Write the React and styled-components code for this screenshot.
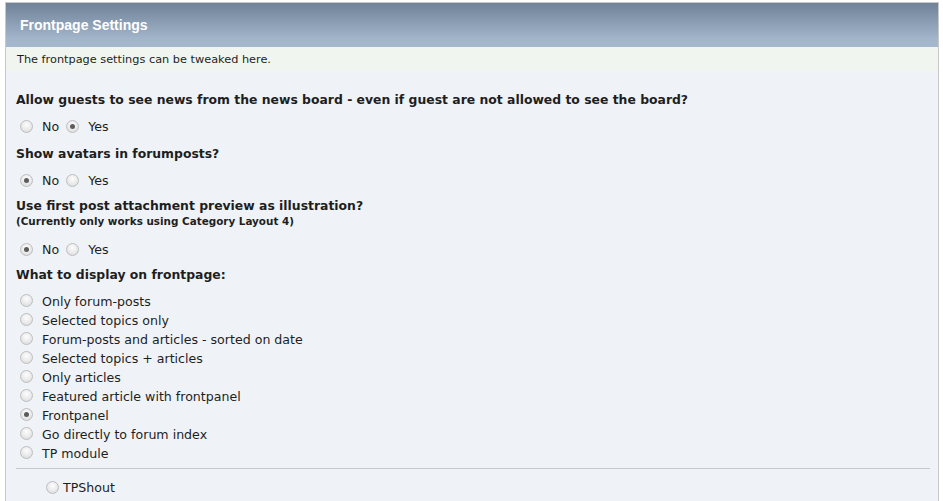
import styled, { createGlobalStyle } from 'styled-components';

const GlobalStyle = createGlobalStyle`
  html, body {
    margin: 0;
    padding: 0;
    background: #ffffff;
  }
  body {
    font-family: "DejaVu Sans", Verdana, sans-serif;
    color: #1e1e1e;
  }
`;

const questions = [
  {
    id: 'guestnews',
    title: 'Allow guests to see news from the news board - even if guest are not allowed to see the board?',
    value: 'yes',
    space: 9,
  },
  {
    id: 'avatars',
    title: 'Show avatars in forumposts?',
    value: 'no',
    space: 7,
  },
  {
    id: 'illustration',
    title: 'Use first post attachment preview as illustration?',
    note: '(Currently only works using Category Layout 4)',
    value: 'no',
    space: 7,
  },
];

const displayOptions = [
  'Only forum-posts',
  'Selected topics only',
  'Forum-posts and articles - sorted on date',
  'Selected topics + articles',
  'Only articles',
  'Featured article with frontpanel',
  'Frontpanel',
  'Go directly to forum index',
  'TP module',
];

const Radio = ({ checked }) => <RadioDot $checked={checked} />;

const App = () => (
  <>
    <GlobalStyle />
    <Panel>
      <Header>Frontpage Settings</Header>
      <Intro>The frontpage settings can be tweaked here.</Intro>
      <Body>
        {questions.map((q) => (
          <Setting key={q.id} $space={q.space}>
            <Question>{q.title}</Question>
            {q.note && <Note>{q.note}</Note>}
            <Choices>
              <Choice>
                <Radio checked={q.value === 'no'} /> No
              </Choice>
              <Choice>
                <Radio checked={q.value === 'yes'} /> Yes
              </Choice>
            </Choices>
          </Setting>
        ))}
        <Setting $space={5}>
          <Question>What to display on frontpage:</Question>
          <OptionList>
            {displayOptions.map((opt) => (
              <Option key={opt}>
                <Radio checked={opt === 'Frontpanel'} />
                {opt}
              </Option>
            ))}
          </OptionList>
        </Setting>
        <Divider />
        <SubOption>
          <Radio checked={false} />
          TPShout
        </SubOption>
      </Body>
    </Panel>
  </>
);

const Panel = styled.div`
  margin: 2px 4px 0 5px;
  border: 1px solid #c8c8c8;
  border-bottom: none;
  background: #eff3f7;
`;

const Header = styled.div`
  height: 44px;
  display: flex;
  align-items: center;
  padding-left: 14px;
  background: linear-gradient(to bottom, #6f8298 0%, #a3b5ca 82%, #a6b8cd 100%);
  color: #ffffff;
  font-family: "Liberation Sans", Arial, sans-serif;
  font-weight: bold;
  font-size: 14px;
`;

const Intro = styled.div`
  height: 24px;
  display: flex;
  align-items: center;
  padding-left: 11px;
  background: #f0f6ef;
  font-size: 11.3px;
`;

const Body = styled.div`
  padding: 20px 0 0 10px;
`;

const Setting = styled.div`
  display: flex;
  flex-direction: column;
  margin-bottom: ${({ $space }) => $space}px;
`;

const Question = styled.div`
  font-size: 12.4px;
  font-weight: bold;
  line-height: 18px;
`;

const Note = styled.div`
  font-size: 10.4px;
  font-weight: bold;
  line-height: 14px;
  margin-top: -1px;
  margin-bottom: 4px;
`;

const Choices = styled.div`
  display: flex;
  gap: 3px;
  margin-top: 9px;
`;

const Choice = styled.label`
  display: flex;
  align-items: center;
  gap: 9px;
  font-size: 12.6px;
  line-height: 18px;
  padding-left: 4px;
`;

const OptionList = styled.div`
  display: flex;
  flex-direction: column;
  margin-top: 8px;
`;

const Option = styled.label`
  display: flex;
  align-items: center;
  gap: 9px;
  padding-left: 4px;
  font-size: 12.6px;
  line-height: 19px;
`;

const RadioDot = styled.span`
  width: 11px;
  height: 11px;
  margin-top: -2px;
  border-radius: 50%;
  border: 1px solid #bdbdbd;
  background: radial-gradient(circle at 50% 35%, #fdfdfd 0%, #e8e8e8 60%, #d4d4d4 100%);
  position: relative;
  flex: none;

  &::after {
    content: '';
    display: ${({ $checked }) => ($checked ? 'block' : 'none')};
    position: absolute;
    left: 3px;
    top: 3px;
    width: 5px;
    height: 5px;
    border-radius: 50%;
    background: #5c5c5c;
  }
`;

const Divider = styled.hr`
  margin: 0 8px 0 0;
  border: none;
  border-top: 1px solid #c8c8c8;
`;

const SubOption = styled.label`
  display: flex;
  align-items: center;
  gap: 4px;
  padding: 11px 0 6px 30px;
  font-size: 12.6px;
  line-height: 16px;
`;

export default App;
